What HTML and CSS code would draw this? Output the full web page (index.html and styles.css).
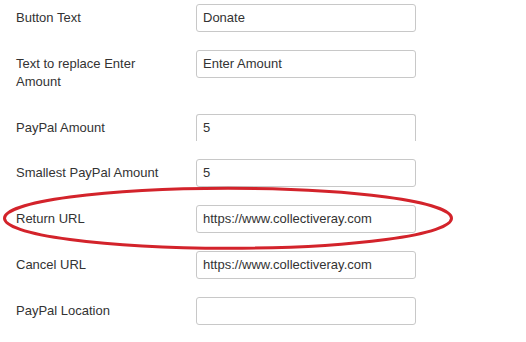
FILE: index.html
```html
<!DOCTYPE html>
<html>
<head>
<meta charset="utf-8">
<link rel="stylesheet" href="styles.css">
</head>
<body>
<div class="page">
  <form class="form">
    <div class="row">
      <label class="label">Button Text</label>
      <div class="field">Donate</div>
    </div>
    <div class="row">
      <label class="label">Text to replace Enter<br>Amount</label>
      <div class="field">Enter Amount</div>
    </div>
    <div class="row row-short">
      <label class="label">PayPal Amount</label>
      <div class="field field-open">5</div>
    </div>
    <div class="row">
      <label class="label">Smallest PayPal Amount</label>
      <div class="field">5</div>
    </div>
    <div class="row">
      <label class="label">Return URL</label>
      <div class="field">https://www.collectiveray.com</div>
    </div>
    <div class="row">
      <label class="label">Cancel URL</label>
      <div class="field">https://www.collectiveray.com</div>
    </div>
    <div class="row">
      <label class="label">PayPal Location</label>
      <div class="field"></div>
    </div>
  </form>
  <svg class="highlight" width="526" height="342" viewBox="0 0 526 342">
    <ellipse cx="228" cy="218.3" rx="223.5" ry="30" fill="none" stroke="#d3232b" stroke-width="3"/>
  </svg>
</div>
</body>
</html>
```
FILE: styles.css
```css
html, body {
  margin: 0;
  padding: 0;
  background: #fff;
}
.page {
  position: relative;
  width: 526px;
  height: 342px;
  overflow: hidden;
  font-family: "Liberation Sans", Arial, Helvetica, sans-serif;
  font-size: 13px;
  color: #333;
}
.form {
  display: flex;
  flex-direction: column;
  gap: 18px;
  padding: 3.5px 0 0 16px;
  margin: 0;
}
.row {
  display: grid;
  grid-template-columns: 180px 220px;
  align-items: start;
}
.row-short .label {
  padding-bottom: 4px;
}
.label {
  padding: 5px 0;
  line-height: 18px;
  color: #333;
}
.field {
  box-sizing: border-box;
  height: 28px;
  border: 1px solid #c8c8c8;
  border-radius: 3px;
  padding: 0 6px;
  line-height: 26px;
  color: #333;
  background: #fff;
}
.field-open {
  height: 27px;
  border-bottom: none;
  border-radius: 3px 3px 0 0;
}
.highlight {
  position: absolute;
  left: 0;
  top: 0;
  pointer-events: none;
}
```
